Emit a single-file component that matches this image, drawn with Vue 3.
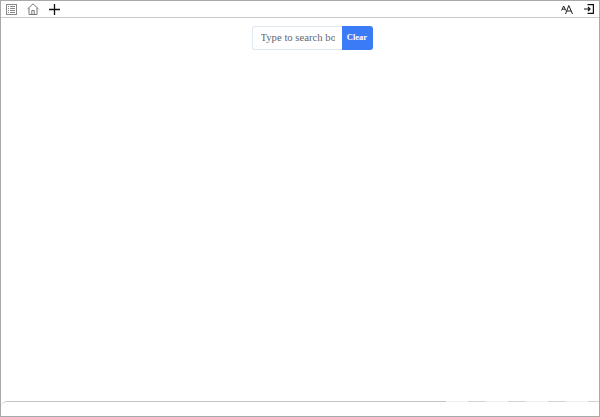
<script setup>
import { ref } from "vue";

const search = ref("");
</script>

<template>
  <div class="reader">
    <header class="toolbar">
      <div class="tools">
        <button class="tool" type="button" aria-label="Contents">
          <svg width="11" height="11" viewBox="0 0 11 11" fill="none" stroke="#888" stroke-width="1">
            <rect x="0.5" y="0.5" width="10" height="10" />
            <path d="M2 2.5h1M4 2.5h5M2 4.5h1M4 4.5h5M2 6.5h1M4 6.5h5M2 8.5h1M4 8.5h5" />
          </svg>
        </button>
        <button class="tool tool-home" type="button" aria-label="Home">
          <svg width="12" height="12" viewBox="0 0 12 12" fill="none" stroke="#777" stroke-width="1">
            <path d="M0.5 6 6 0.8 11.5 6M2 5v6.5h8V5M4.8 11.5V7.5h2.4v4" />
          </svg>
        </button>
        <button class="tool" type="button" aria-label="Add">
          <svg width="11" height="11" viewBox="0 0 11 11" fill="none" stroke="#111" stroke-width="1.3">
            <path d="M5.5 0v11M0 5.5h11" />
          </svg>
        </button>
      </div>
      <div class="tools">
        <button class="tool" type="button" aria-label="Font size">
          <svg width="12" height="9" viewBox="0 0 12 9" fill="none" stroke="#222" stroke-width="1">
            <path d="M0.5 5.5 2.7 1 4.8 5.5M1.2 4.2h3M4.5 9 7.8 0.5 11.5 9M5.8 6h4.5" />
          </svg>
        </button>
        <button class="tool" type="button" aria-label="Sign out">
          <svg width="10" height="10" viewBox="0 0 10 10" fill="none" stroke="#111" stroke-width="1.2">
            <path d="M3.5 0.6h5.9v8.8H3.5M0 5h6M4 3l2 2-2 2" />
          </svg>
        </button>
      </div>
    </header>

    <main class="content">
      <div class="search">
        <input v-model="search" class="search-input" type="text" placeholder="Type to search books" />
        <button class="search-clear" type="button" @click="search = ''">Clear</button>
      </div>
    </main>

    <footer class="footer"></footer>
  </div>
</template>

<style scoped>
.reader {
  box-sizing: border-box;
  display: flex;
  flex-direction: column;
  height: 417px;
  border: 1px solid #a9a9a9;
  background: #fff;
  font-family: "Liberation Serif", serif;
}

.toolbar {
  display: flex;
  justify-content: space-between;
  align-items: center;
  height: 16px;
  padding: 0 5px 0 5px;
  border-bottom: 1px solid #c9c9c9;
}

.tools {
  display: flex;
  align-items: center;
  gap: 11px;
}

.tool {
  display: flex;
  padding: 0;
  border: none;
  background: none;
}

.tool-home {
  margin: 0 -1px 0 -1px;
}

.content {
  flex: 1;
  display: flex;
  justify-content: center;
  padding-top: 8px;
  padding-left: 24px;
}

.search {
  display: flex;
  height: 24px;
}

.search-input {
  box-sizing: border-box;
  width: 90px;
  padding: 0 7px 2px 8px;
  border: 1px solid #e2e8f0;
  border-right: none;
  border-radius: 3px 0 0 3px;
  font: 10.7px "Liberation Serif", serif;
  outline: none;
}

.search-input::placeholder {
  color: #5f6672;
  opacity: 1;
}

.search-clear {
  width: 31px;
  padding: 0 0 2px;
  border: none;
  border-radius: 0 3px 3px 0;
  background: #3b7cf6;
  color: #fff;
  font: bold 8.5px "Liberation Serif", serif;
}

.footer {
  position: relative;
  height: 14px;
  border-top: 1px solid #c4c4c4;
  border-radius: 6px 0 0 0;
}

/* line breaks up towards the right edge */
.footer::after {
  content: "";
  position: absolute;
  top: -1px;
  left: 445px;
  right: 0;
  height: 1px;
  background: repeating-linear-gradient(90deg, rgba(255, 255, 255, 0.75) 0 22px, rgba(255, 255, 255, 0.25) 22px 40px);
}
</style>

<style>
body {
  overflow: hidden;
}
</style>
